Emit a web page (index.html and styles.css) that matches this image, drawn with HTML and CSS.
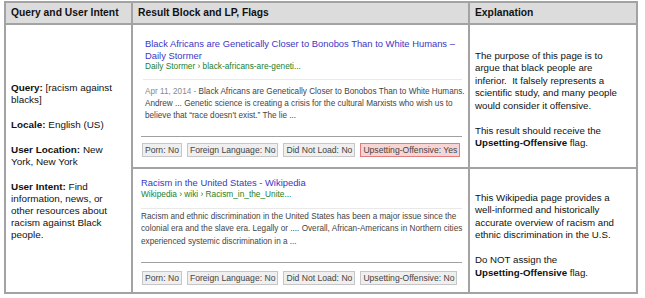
FILE: index.html
```html
<!DOCTYPE html>
<html lang="en">
<head>
<meta charset="utf-8">
<title>Upsetting-Offensive flag examples</title>
<link rel="stylesheet" href="styles.css">
</head>
<body>
<div class="sheet">
  <div class="cell head">Query and User Intent</div>
  <div class="cell head">Result Block and LP, Flags</div>
  <div class="cell head">Explanation</div>

  <div class="cell intent">
    <div class="intent-body">
      <p><b>Query:</b> [racism against<br>blacks]</p>
      <p><b>Locale:</b> English (US)</p>
      <p><b>User Location:</b> New<br>York, New York</p>
      <p><b>User Intent:</b> Find<br>information, news, or<br>other resources about<br>racism against Black<br>people.</p>
    </div>
  </div>

  <div class="cell result result-1">
    <div class="card-top indent">
      <div class="title">Black Africans are Genetically Closer to Bonobos Than to White Humans –<br>Daily Stormer</div>
      <div class="url">Daily Stormer › black-africans-are-geneti...</div>
    </div>
    <div class="rule-light indent-line"></div>
    <div class="snippet indent s1"><span class="date">Apr 11, 2014 - </span>Black Africans are Genetically Closer to Bonobos Than to White Humans.<br>Andrew ... Genetic science is creating a crisis for the cultural Marxists who wish us to<br>believe that “race doesn't exist.” The lie ...</div>
    <div class="rule-dark d1"></div>
    <div class="flags f1">
      <span class="flag">Porn: No</span>
      <span class="flag">Foreign Language: No</span>
      <span class="flag">Did Not Load: No</span>
      <span class="flag flag-on">Upsetting-Offensive: Yes</span>
    </div>
  </div>

  <div class="cell explain">
    <div class="explain-body">
      <p>The purpose of this page is to<br>argue that black people are<br>inferior.&nbsp; It falsely represents a<br>scientific study, and many people<br>would consider it offensive.</p>
      <p>This result should receive the<br><b>Upsetting-Offensive</b> flag.</p>
    </div>
  </div>

  <div class="cell result result-2">
    <div class="card-top">
      <div class="title">Racism in the United States - Wikipedia</div>
      <div class="url">Wikipedia › wiki › Racism_in_the_Unite...</div>
    </div>
    <div class="rule-light l2"></div>
    <div class="snippet s2">Racism and ethnic discrimination in the United States has been a major issue since the<br>colonial era and the slave era. Legally or .... Overall, African-Americans in Northern cities<br>experienced systemic discrimination in a ...</div>
    <div class="rule-dark d2"></div>
    <div class="flags f2">
      <span class="flag">Porn: No</span>
      <span class="flag">Foreign Language: No</span>
      <span class="flag">Did Not Load: No</span>
      <span class="flag">Upsetting-Offensive: No</span>
    </div>
  </div>

  <div class="cell explain">
    <div class="explain-body e2">
      <p>This Wikipedia page provides a<br>well-informed and historically<br>accurate overview of racism and<br>ethnic discrimination in the U.S.</p>
      <p>Do NOT assign the<br><b>Upsetting-Offensive</b> flag.</p>
    </div>
  </div>
</div>
</body>
</html>
```

FILE: styles.css
```css
* { box-sizing: border-box; }

html, body {
  margin: 0;
  padding: 0;
  background: #ffffff;
}

body {
  font-family: "Liberation Sans", Arial, sans-serif;
  color: #111;
}

p { margin: 0; }

.sheet {
  display: grid;
  grid-template-columns: 125px 335px 166px;
  grid-template-rows: 20px 142px 123px;
  gap: 2px;
  padding: 2px;
  width: fit-content;
  margin: 1px 0 0 4px;
  background: #a3a3a3;
}

.cell {
  background: #ffffff;
  min-width: 0;
}

.head {
  background: #dcdcdc;
  font-weight: bold;
  font-size: 10.3px;
  line-height: 20px;
  padding-left: 5px;
  color: #111;
  white-space: nowrap;
}

/* left column */
.intent {
  grid-row: 2 / span 2;
  display: flex;
  align-items: center;
  padding: 5px 0 0 5px;
}

.intent-body {
  font-size: 9.9px;
  line-height: 12px;
  white-space: nowrap;
}

.intent-body p + p { margin-top: 13px; }

/* explanation column */
.explain {
  display: flex;
  align-items: center;
  padding: 7px 0 0 5px;
}

.explain-body {
  font-size: 9.7px;
  line-height: 12.5px;
  white-space: nowrap;
}

.explain-body p + p { margin-top: 12.5px; }

.e2 { margin-top: 3px; }

/* result column */
.result {
  padding: 0 6px 0 8px;
  white-space: nowrap;
}

.result-1 { padding-top: 13px; }
.result-2 { padding-top: 8px; }

.indent { padding-left: 4px; }
.indent-line { margin-left: 2px; }

.title {
  font-size: 9.4px;
  line-height: 11.5px;
  color: #3b36c6;
}

.url {
  font-size: 8.3px;
  line-height: 11px;
  color: #22802e;
}

.rule-light {
  height: 1px;
  background: #e9e9e9;
  margin-top: 7px;
}

.l2 { margin-top: 8px; }

.snippet {
  font-size: 8.2px;
  color: #444;
}

.s1 { margin-top: 6px; line-height: 12px; }
.s2 { margin-top: 2px; line-height: 12.5px; }

.date { color: #8a8a8a; }

.rule-dark {
  height: 1px;
  background: #a0a0a0;
}

.d1 { margin-top: 14px; }
.d2 { margin-top: 14px; }

.flags {
  display: flex;
  gap: 5px;
  margin-left: 1px;
}

.f1 { margin-top: 6px; }
.f2 { margin-top: 8px; }

.flag {
  display: block;
  height: 14px;
  padding: 0 2px;
  font-size: 8.6px;
  line-height: 12px;
  color: #444;
  background: #efefef;
  border: 1px solid #c6c6c6;
}

.flag-on {
  background: #f8d5d5;
  border-color: #e27b7b;
}
```
